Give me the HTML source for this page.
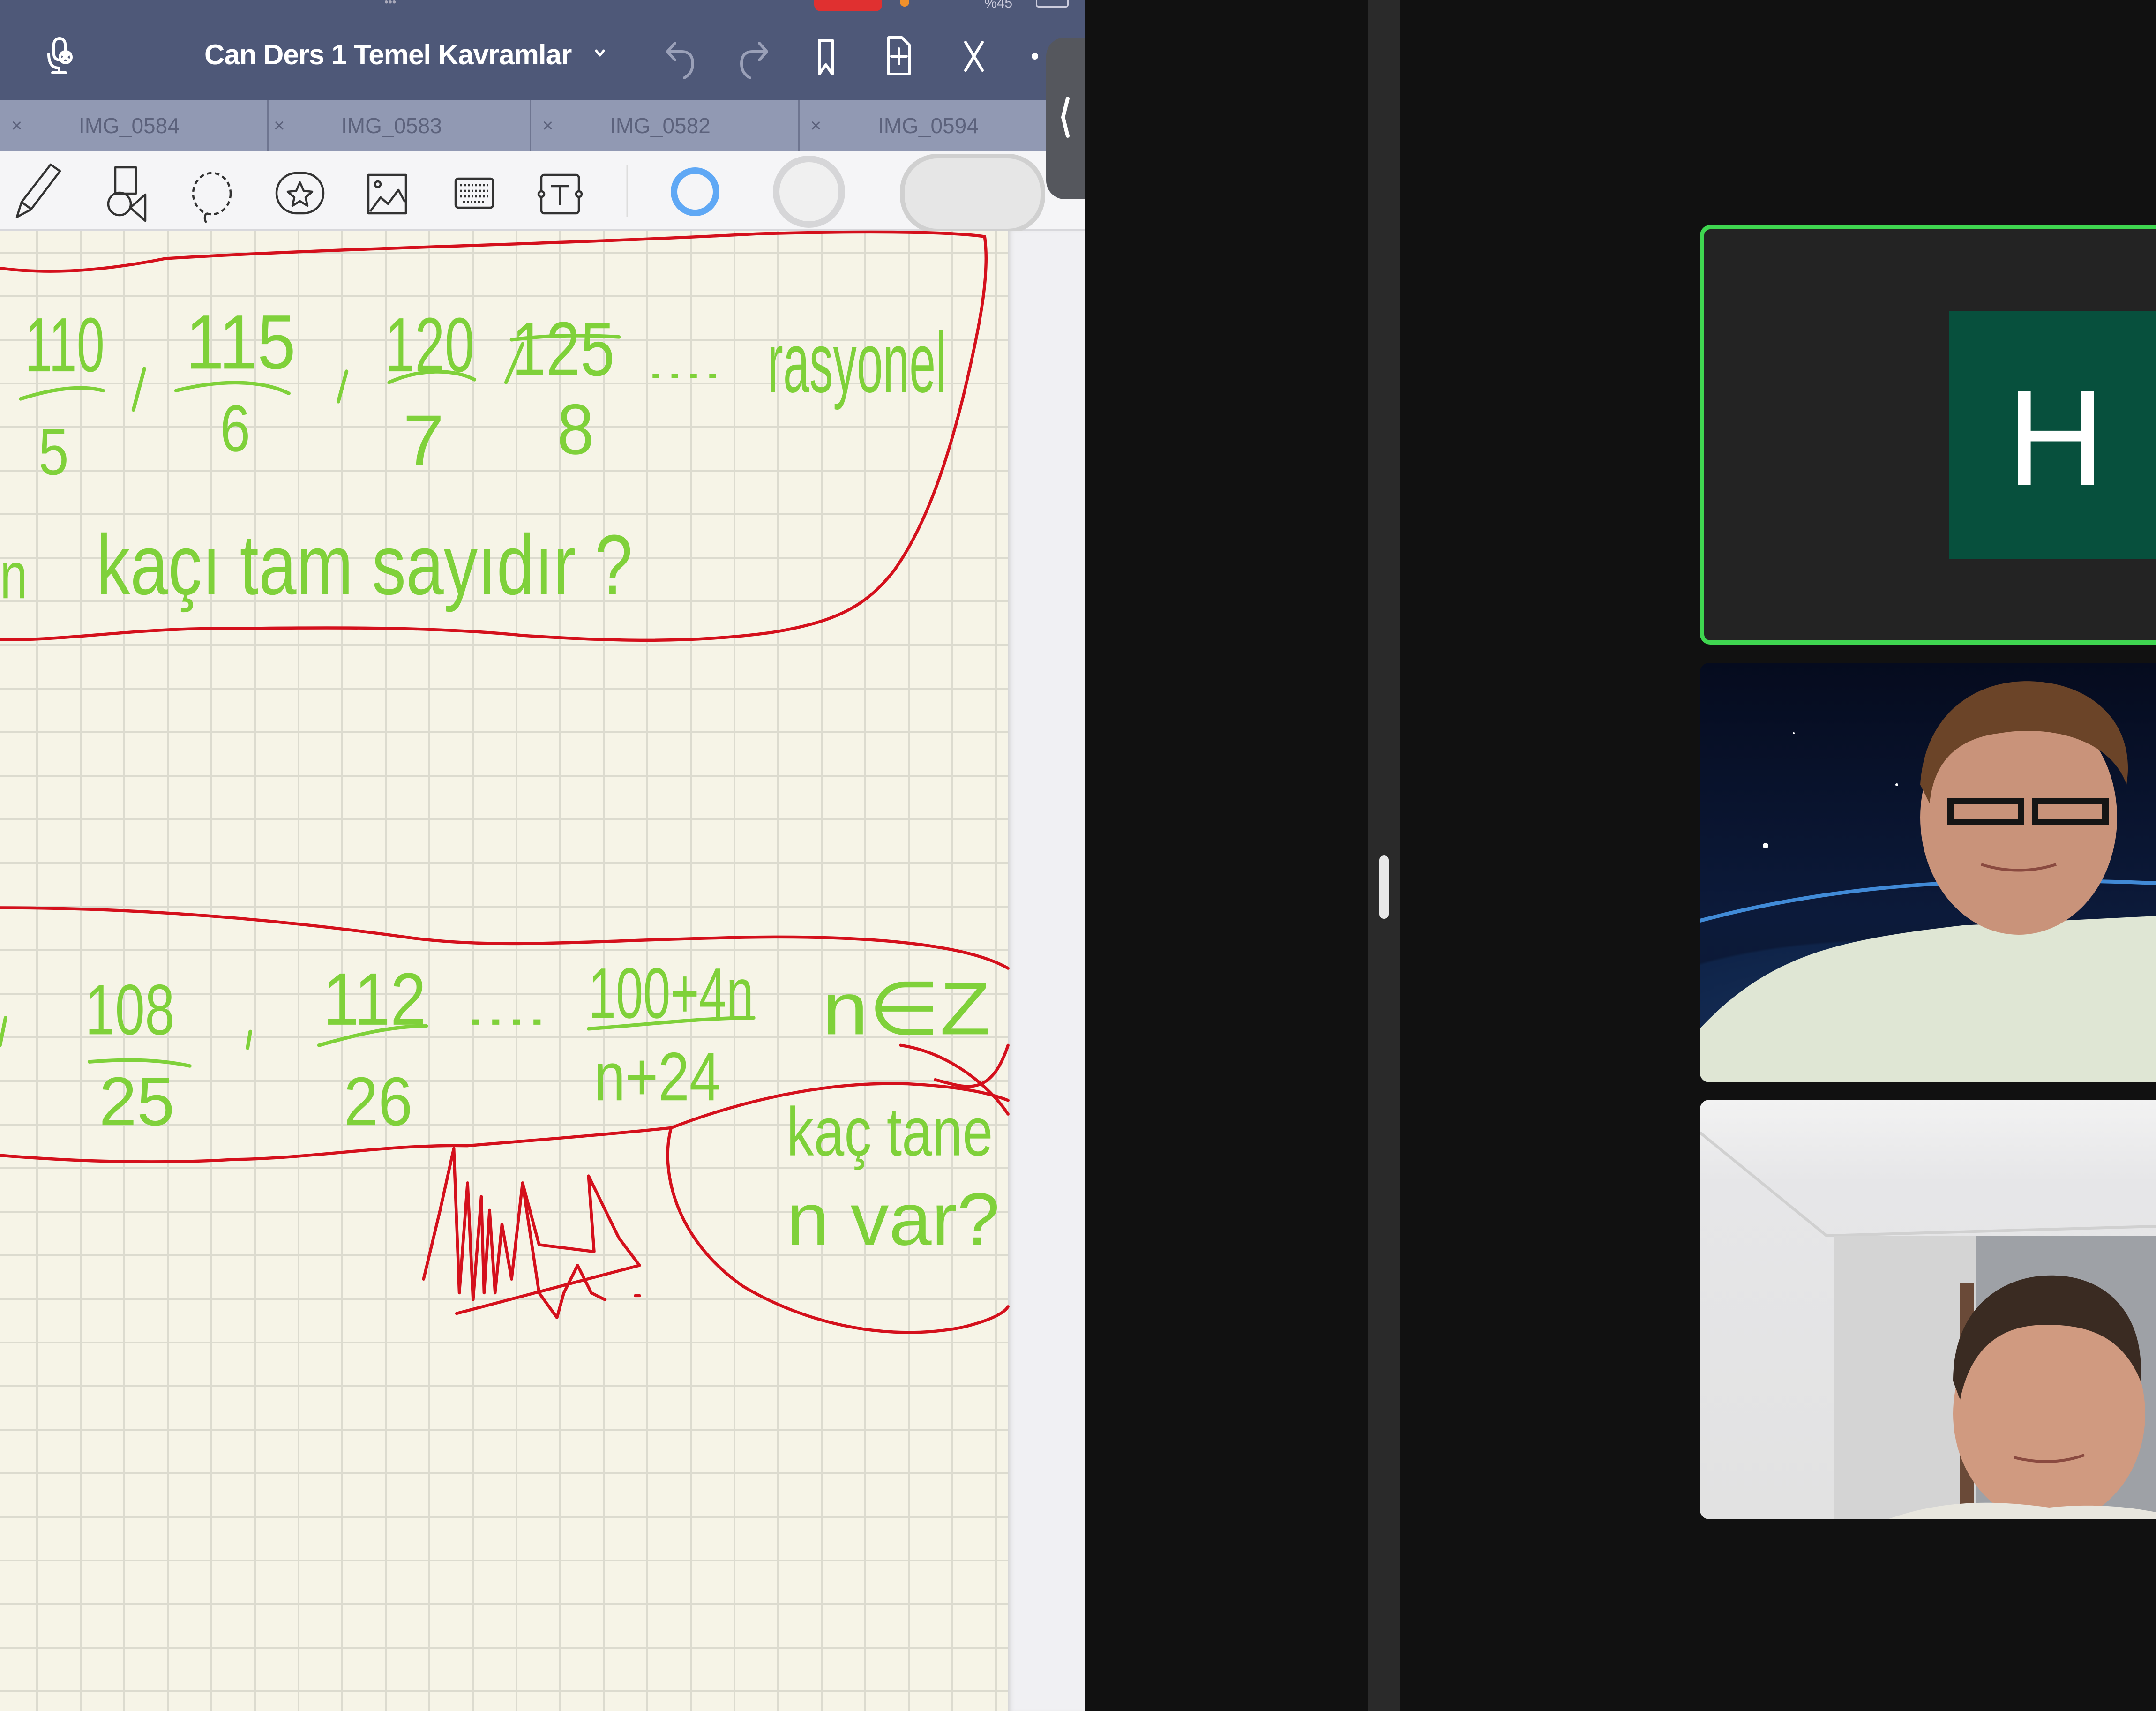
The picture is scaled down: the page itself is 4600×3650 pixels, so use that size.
<!DOCTYPE html>
<html><head><meta charset="utf-8"><style>
*{margin:0;padding:0;box-sizing:border-box}
body{width:4600px;height:3650px;background:#111111;position:relative;overflow:hidden;font-family:"Liberation Sans",sans-serif}
.abs{position:absolute}
#topbar{left:0;top:0;width:2315px;height:214px;background:#4e5878}
#tabs{left:0;top:214px;width:2315px;height:109px;background:#9199b3}
.tab{position:absolute;top:0;height:109px;width:573px;border-right:3px solid #6e7590;color:#5c627c;font-size:46px;line-height:109px}
.tab .x{position:absolute;left:24px;font-size:40px}
.tab .l{position:absolute;left:168px}
#tool{left:0;top:323px;width:2315px;height:170px;background:#f5f5f7;border-bottom:4px solid #d8d8dc}
#paper{left:0;top:493px;width:2151px;height:3157px;background-color:#f6f4e7;
background-image:linear-gradient(to right,#dcdbcf 4px,transparent 4px),linear-gradient(to bottom,#dcdbcf 4px,transparent 4px);
background-size:93px 93px;background-position:77px 44px}
#margin{left:2151px;top:493px;width:164px;height:3157px;background:#f0f0f3;box-shadow:inset 10px 0 12px -8px #c8c8c8}
#sidehandle{left:2232px;top:80px;width:83px;height:345px;background:#55575d;border-radius:40px 0 0 40px}
#divider{left:2919px;top:0;width:68px;height:3650px;background:#2a2a2a}
#grip{left:2943px;top:1825px;width:20px;height:135px;background:#e8e8e8;border-radius:10px}
.tile{position:absolute;left:3627px;width:973px;overflow:hidden}
</style></head><body>

<div id="topbar" class="abs"></div>
<!-- status bar bits -->
<div class="abs" style="left:820px;top:0;width:70px;height:12px;color:#aab;font-size:24px;line-height:10px">•••</div>
<div class="abs" style="left:1737px;top:0;width:145px;height:24px;background:#e03030;border-radius:0 0 14px 14px"></div>
<div class="abs" style="left:1920px;top:0;width:20px;height:14px;background:#f0902a;border-radius:0 0 10px 10px"></div>
<div class="abs" style="left:2100px;top:-10px;color:#ccd;font-size:30px">%45</div>
<div class="abs" style="left:2210px;top:0;width:70px;height:16px;border:3px solid #ccd;border-top:none;border-radius:0 0 6px 6px"></div>

<!-- top bar icons -->
<svg class="abs" style="left:0;top:0" width="2315" height="214" viewBox="0 0 2315 214" fill="none" stroke="#fff" stroke-width="6" stroke-linecap="round" stroke-linejoin="round">
 <rect x="115" y="82" width="24" height="46" rx="12"/>
 <path d="M104 115 q0 30 22 30 M126 145 v10 M112 155 h28"/>
 <circle cx="140" cy="122" r="12"/><path d="M133 115 l14 14 M147 115 l-14 14"/>
 <path d="M1272 108 l8 10 l8 -10" stroke-width="5"/>
 <path d="M1440 92 l-16 18 l16 18 M1424 110 h30 q24 0 24 26 q0 20 -18 30" stroke="#9aa0b8"/>
 <path d="M1620 92 l16 18 l-16 18 M1636 110 h-30 q-24 0 -24 26 q0 20 18 30" stroke="#9aa0b8"/>
 <path d="M1748 86 h28 v72 l-14 -20 l-14 20 z"/>
 <path d="M1896 80 h28 l16 16 v62 h-44 z M1918 104 v32 M1902 120 h32"/>
 <path d="M2060 90 l36 60 M2096 90 l-36 60"/>
 <circle cx="2208" cy="120" r="4" fill="#fff"/>
</svg>
<div class="abs" style="left:436px;top:82px;color:#fff;font-size:60px;font-weight:bold;letter-spacing:-1px;white-space:nowrap">Can Ders 1 Temel Kavramlar</div>

<div id="tabs" class="abs">
 <div class="tab" style="left:0"><span class="x">×</span><span class="l">IMG_0584</span></div>
 <div class="tab" style="left:560px"><span class="x">×</span><span class="l">IMG_0583</span></div>
 <div class="tab" style="left:1133px"><span class="x">×</span><span class="l">IMG_0582</span></div>
 <div class="tab" style="left:1705px;border-right:none"><span class="x">×</span><span class="l">IMG_0594</span></div>
</div>

<div id="tool" class="abs"></div>
<svg class="abs" style="left:0;top:323px" width="2315" height="170" viewBox="0 0 2315 170" fill="none" stroke="#333" stroke-width="4.5" stroke-linejoin="round">
 <path d="M36 140 l10 -32 l62 -80 l20 14 l-62 82 z M46 108 l22 16"/>
 <rect x="246" y="34" width="44" height="56"/><circle cx="255" cy="112" r="24"/><path d="M310 148 v-56 l-32 28 z"/>
 <ellipse cx="452" cy="90" rx="40" ry="44" stroke-dasharray="10 7"/><path d="M440 132 q-6 10 0 20"/>
 <rect x="590" y="46" width="100" height="86" rx="43"/><path d="M640 66 l8 18 l18 2 l-14 12 l4 18 l-16 -10 l-16 10 l4 -18 l-14 -12 l18 -2 z"/>
 <rect x="786" y="50" width="80" height="82"/><circle cx="806" cy="70" r="6"/><path d="M790 128 l22 -30 l16 14 l22 -30 l14 26"/>
 <rect x="972" y="58" width="80" height="62" rx="6"/><path d="M982 72 h60 M982 84 h60 M982 96 h60 M988 108 h48" stroke-dasharray="4 4"/>
 <rect x="1155" y="50" width="80" height="82" rx="6"/><path d="M1176 74 h38 M1195 74 v40"/>
 <circle cx="1155" cy="91" r="6" fill="#f5f5f7"/><circle cx="1235" cy="91" r="6" fill="#f5f5f7"/>
 <path d="M1338 30 v110" stroke="#ddd" stroke-width="3"/>
 <circle cx="1483" cy="86" r="45" stroke="#5fa8f5" stroke-width="14"/>
 <circle cx="1726" cy="86" r="70" stroke="#d6d6d8" stroke-width="14" fill="#f0f0f0"/>
 <rect x="1925" y="10" width="300" height="160" rx="75" fill="#e6e6e6" stroke="#d0d0d0" stroke-width="10"/>
</svg>

<div id="paper" class="abs"></div>
<div id="margin" class="abs"></div>

<!-- handwriting -->
<svg class="abs" style="left:0;top:0" width="2315" height="3650" viewBox="0 0 789 1244" fill="none" stroke-linecap="round" stroke-linejoin="round">
 <g stroke="#d4101c" stroke-width="2.2">
  <path d="M0 195 C40 200 80 196 120 188 C250 180 400 178 550 170 C620 168 690 168 716 172 C720 200 712 240 700 290 C690 330 675 380 650 415 C630 440 610 452 560 460 C500 468 440 466 380 462 C320 456 250 456 170 457 C100 456 50 466 0 465"/>
  <path d="M0 660 C100 660 200 668 300 682 C360 690 430 684 520 682 C620 679 700 685 733 704"/>
  <path d="M0 840 C60 845 120 846 170 843 C230 842 280 832 340 833 C400 828 440 825 488 820 C540 800 600 786 660 788 C700 790 720 795 733 800"/>
  <path d="M655 760 C690 765 720 790 733 810 M733 760 C720 800 700 790 680 785"/>
  <path d="M488 820 C480 850 490 900 540 935 C590 965 650 975 700 965 C720 960 730 955 733 950"/>
  <path d="M308 930 L320 880 L330 835 L334 940 L340 860 L344 945 L350 870 L352 940 L356 880 L360 940 L365 890 L372 930 L380 860 L392 940 L405 958 L410 940 L420 920 L430 940 L440 945 M380 860 L392 905 L432 910 L428 855 L450 900 L465 920 L332 955 M462 942 h3"/>
 </g>
 <g fill="#7fd13a" font-family="Liberation Sans, sans-serif" stroke="none">
  <text x="18" y="270" font-size="56" textLength="58" lengthAdjust="spacingAndGlyphs">110</text>
  <text x="28" y="345" font-size="48" textLength="22" lengthAdjust="spacingAndGlyphs">5</text>
  <text x="135" y="268" font-size="56" textLength="80" lengthAdjust="spacingAndGlyphs">115</text>
  <text x="160" y="328" font-size="48" textLength="22" lengthAdjust="spacingAndGlyphs">6</text>
  <text x="280" y="270" font-size="56" textLength="65" lengthAdjust="spacingAndGlyphs">120</text>
  <text x="293" y="338" font-size="52" textLength="30" lengthAdjust="spacingAndGlyphs">7</text>
  <text x="372" y="273" font-size="56" textLength="75" lengthAdjust="spacingAndGlyphs">125</text>
  <text x="405" y="330" font-size="52" textLength="27" lengthAdjust="spacingAndGlyphs">8</text>
  <text x="470" y="275" font-size="30" textLength="55" lengthAdjust="spacingAndGlyphs">....</text>
  <text x="558" y="285" font-size="62" textLength="130" lengthAdjust="spacingAndGlyphs">rasyonel</text>
  <text x="0" y="435" font-size="48" textLength="20" lengthAdjust="spacingAndGlyphs">n</text>
  <text x="70" y="432" font-size="62" textLength="390" lengthAdjust="spacingAndGlyphs">kaçı tam sayıdır ?</text>
  <text x="62" y="752" font-size="52" textLength="65" lengthAdjust="spacingAndGlyphs">108</text>
  <text x="72" y="818" font-size="50" textLength="55" lengthAdjust="spacingAndGlyphs">25</text>
  <text x="235" y="745" font-size="54" textLength="75" lengthAdjust="spacingAndGlyphs">112</text>
  <text x="250" y="818" font-size="50" textLength="50" lengthAdjust="spacingAndGlyphs">26</text>
  <text x="338" y="745" font-size="36" textLength="60" lengthAdjust="spacingAndGlyphs">....</text>
  <text x="428" y="740" font-size="52" textLength="120" lengthAdjust="spacingAndGlyphs">100+4n</text>
  <text x="432" y="800" font-size="50" textLength="92" lengthAdjust="spacingAndGlyphs">n+24</text>
  <text x="598" y="752" font-size="54" textLength="122" lengthAdjust="spacingAndGlyphs">n∈Z</text>
  <text x="572" y="840" font-size="50" textLength="150" lengthAdjust="spacingAndGlyphs">kaç tane</text>
  <text x="572" y="905" font-size="54" textLength="155" lengthAdjust="spacingAndGlyphs">n var?</text>
 </g>
 <g stroke="#7fd13a" stroke-width="2.6">
  <path d="M15 290 C40 282 60 280 75 284"/>
  <path d="M128 284 C160 276 190 276 210 286"/>
  <path d="M283 278 C305 268 330 268 345 276"/>
  <path d="M372 247 C395 244 420 243 450 245"/>
  <path d="M105 268 L97 298 M252 270 L246 292 M380 250 L368 278 M0 760 L4 740 M182 750 L180 762"/>
  <path d="M65 772 C90 770 115 770 138 775 M232 760 C260 752 285 746 310 746 M428 748 C470 745 510 740 548 740"/>
 </g>
</svg>

<div id="sidehandle" class="abs"></div>
<svg class="abs" style="left:2232px;top:80px" width="83" height="345"><path d="M46 130 l-10 40 l10 40" stroke="#fff" stroke-width="8" fill="none" stroke-linecap="round"/></svg>

<div id="divider" class="abs"></div>
<div id="grip" class="abs"></div>

<!-- tile 1 -->
<div class="tile" style="top:480px;height:895px;background:#232323;border:9px solid #3fd650;border-right:none;border-radius:22px 0 0 22px">
 <div class="abs" style="left:523px;top:174px;width:460px;height:530px;background:#07503d"></div>
 <div class="abs" style="left:523px;top:300px;width:455px;text-align:center;color:#fff;font-size:290px;line-height:290px">H</div>
</div>

<!-- tile 2 -->
<div class="tile" style="top:1414px;height:895px;border-radius:20px 0 0 20px;background:radial-gradient(ellipse 1400px 500px at 400px 820px,#18325c 0%,#0f2449 45%,transparent 46%),linear-gradient(180deg,#050b1e 0%,#0c1a3a 60%,#0a1730 100%)">
 <svg class="abs" style="left:0;top:0" width="973" height="895">
  <path d="M0 550 C300 470 600 455 973 470" stroke="#4fa8ff" stroke-width="8" fill="none" opacity="0.8"/>
  <circle cx="140" cy="390" r="6" fill="#fff"/><circle cx="420" cy="260" r="3" fill="#fff"/><circle cx="200" cy="150" r="2" fill="#fff"/><circle cx="600" cy="100" r="2" fill="#fff"/>
  <path d="M0 895 L0 780 C150 620 300 590 560 560 L973 540 L973 895 Z" fill="#dfe6d4"/>
  <ellipse cx="680" cy="330" rx="210" ry="250" fill="#c9937a"/>
  <path d="M470 260 C480 100 600 30 720 40 C850 50 930 140 910 260 C880 170 760 130 640 150 C560 160 500 200 490 300 Z" fill="#6b4428"/>
  <path d="M535 295 h150 v45 h-150 z M715 295 h150 v45 h-150 z" fill="none" stroke="#151515" stroke-width="14"/>
  <path d="M600 430 q80 25 160 0" stroke="#8a4a40" stroke-width="6" fill="none"/>
 </svg>
</div>

<!-- tile 3 -->
<div class="tile" style="top:2346px;height:895px;border-radius:20px 0 0 20px;background:linear-gradient(180deg,#f2f2f2 0%,#e6e6e8 20%,#e2e2e2 100%)">
 <svg class="abs" style="left:0;top:0" width="973" height="895">
  <path d="M0 70 L270 290 L973 270" stroke="#d0d0d0" stroke-width="6" fill="none"/>
  <rect x="285" y="290" width="688" height="605" fill="#d4d4d4"/>
  <rect x="590" y="290" width="383" height="605" fill="#9ea1a6"/>
  <rect x="555" y="390" width="30" height="505" fill="#6a4a38"/>
  <ellipse cx="745" cy="670" rx="205" ry="235" fill="#d09a80"/>
  <path d="M540 600 C540 440 650 370 760 375 C880 380 950 470 940 600 C900 500 820 480 740 480 C650 480 580 520 555 640 Z" fill="#3a2b22"/>
  <path d="M670 763 q80 20 150 -5" stroke="#8a4a40" stroke-width="6" fill="none"/>
  <path d="M400 895 C500 860 600 850 745 870 C850 860 920 870 973 880 L973 895 Z" fill="#e8e6de"/>
 </svg>
</div>

</body></html>
